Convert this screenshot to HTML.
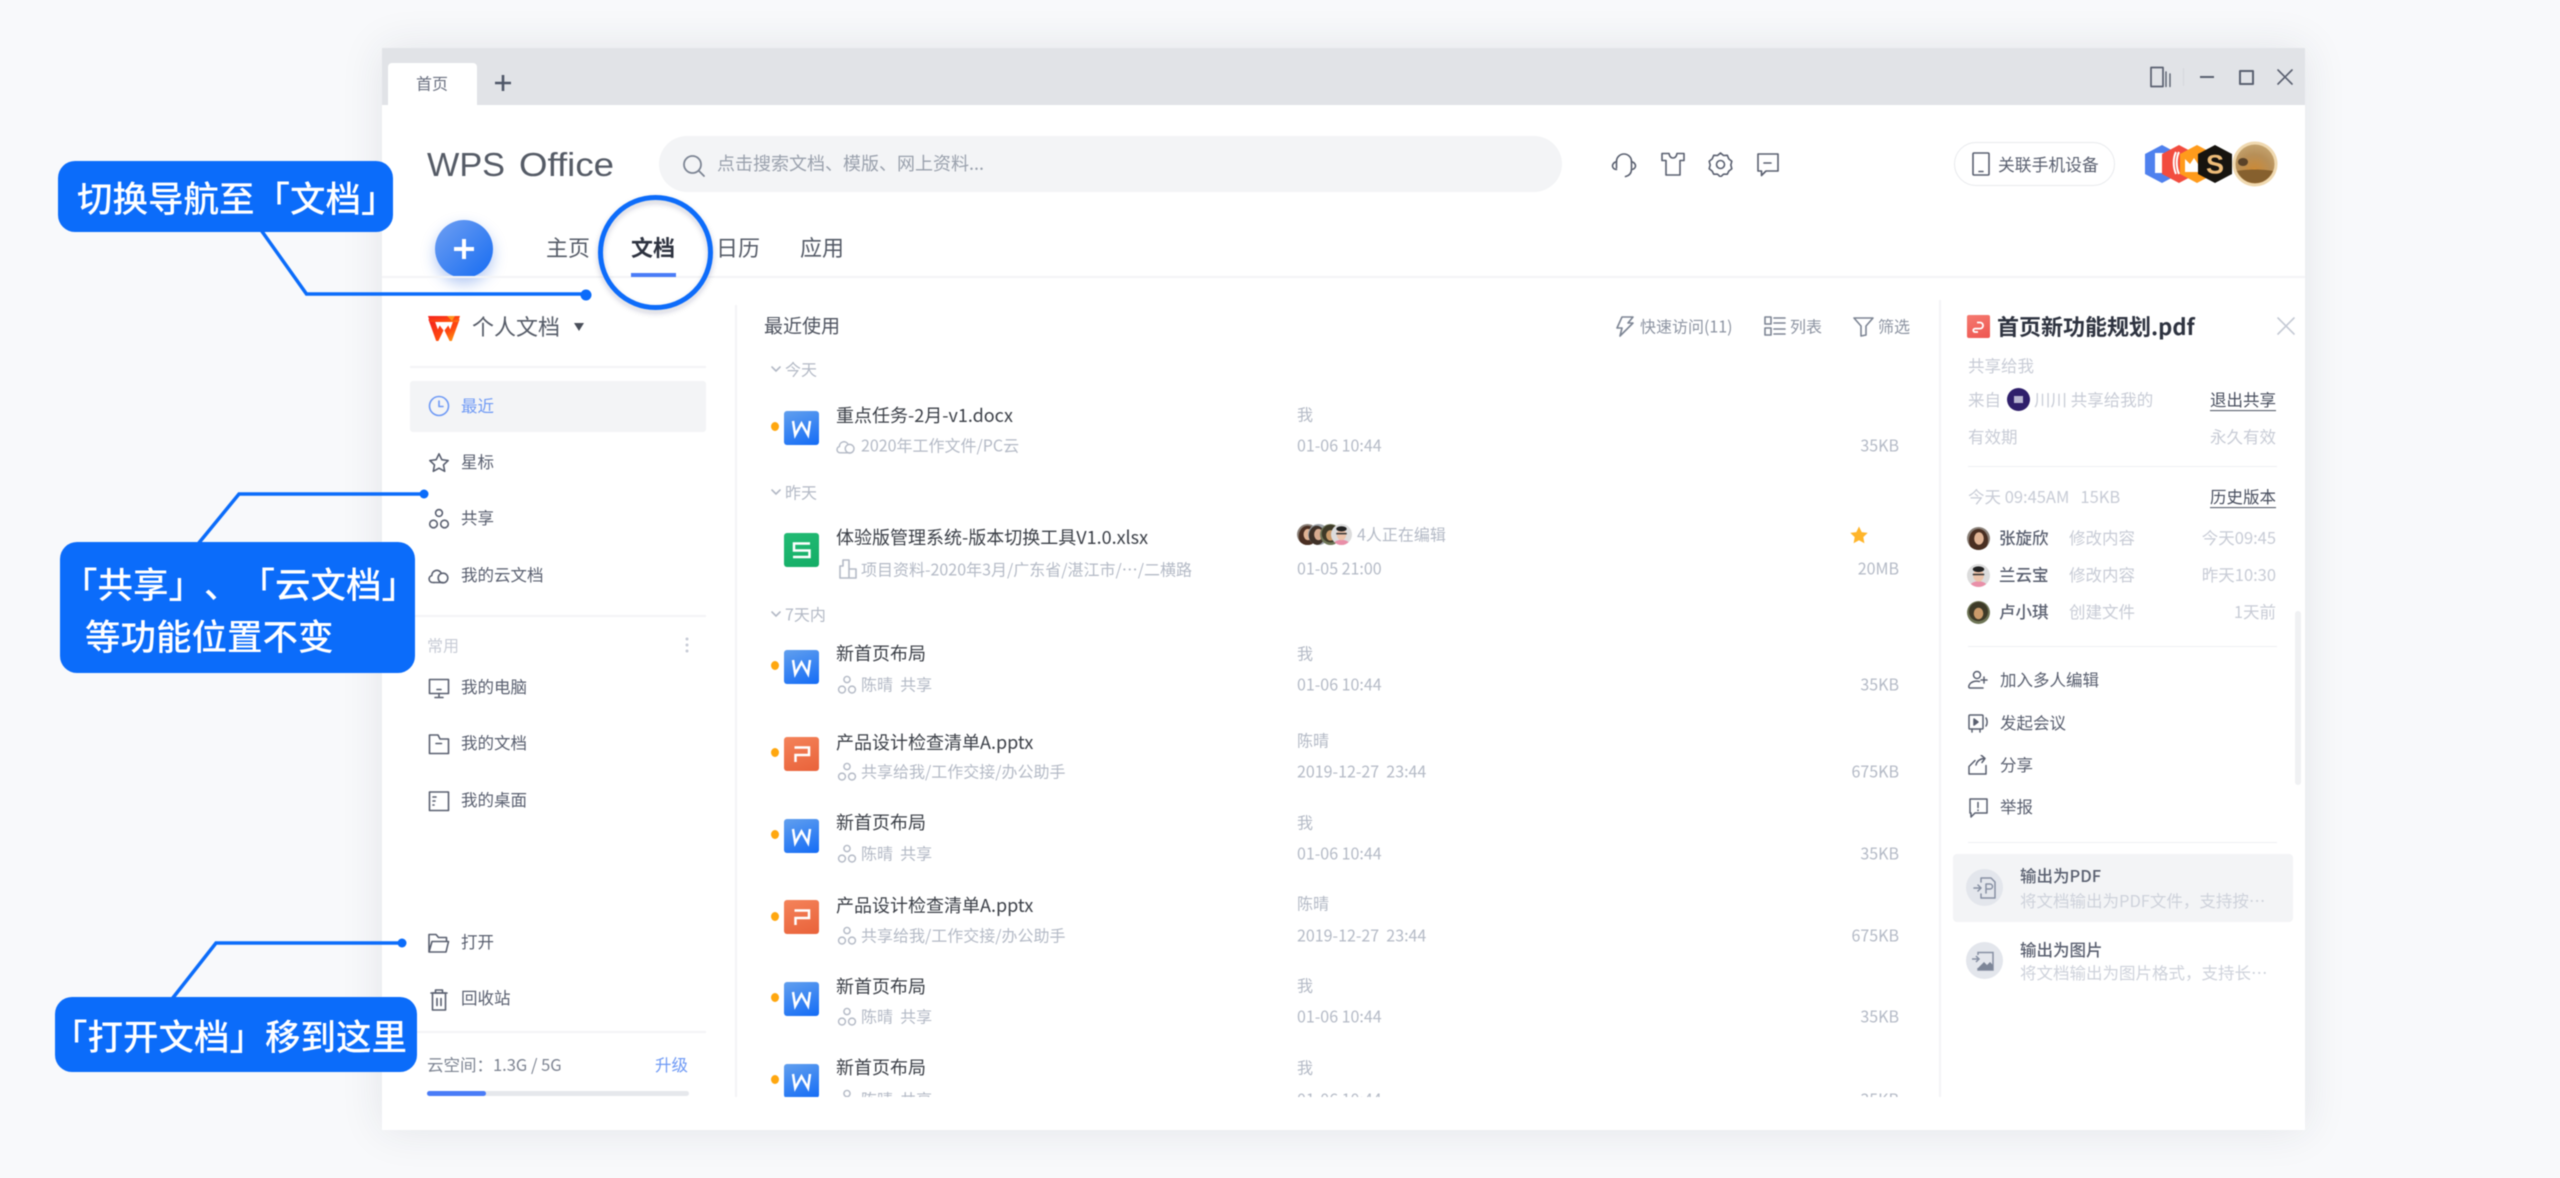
<!DOCTYPE html>
<html lang="zh">
<head>
<meta charset="utf-8">
<title>WPS Office</title>
<style>
html,body{margin:0;padding:0;width:2560px;height:1178px;overflow:hidden;background:#f8f9fb}
body{font-family:"Noto Sans CJK SC","Liberation Sans",sans-serif;color:#4a4f5a;text-spacing-trim:space-all}
#a{position:absolute;left:0;top:0;width:2560px;height:1178px;filter:blur(.45px)}
.win{position:absolute;left:382px;top:48px;width:1923px;height:1082px;background:#fff;box-shadow:0 0 40px rgba(40,50,70,.10)}
.b{position:absolute}
.t{position:absolute;white-space:nowrap;transform:translateY(-50%);line-height:1.2}
.ttl{font-size:18px;color:#3c4048}
.sub{font-size:16px;color:#b4bac6;transform:translateY(calc(-50% - 1px))}
.side{font-size:16.5px;color:#5a6070;left:461px}
.grp{font-size:16px;color:#b4bac6;left:785px}
.p{font-size:16.5px;color:#c8ccd6}
.d{font-size:16.5px;color:#5a6070}
.u{font-size:16.5px;color:#4a5060;text-decoration:underline;text-underline-offset:4px}
.dot{position:absolute;left:771px;width:8px;height:9px;border-radius:50%;background:#ffa70f}
.ic{position:absolute;fill:none;stroke:#5a6070;stroke-width:1.6;stroke-linejoin:round;stroke-linecap:round}
.ics{stroke:#b4bac6}
.fi{position:absolute;left:784px;width:35px;height:34px;border-radius:3px}
.fw{background:linear-gradient(160deg,#619fee,#146cf6)}
.fs{background:linear-gradient(160deg,#22bb74,#14ad66)}
.fp{background:linear-gradient(160deg,#f4835a,#e9623a)}
.fi svg{display:block;fill:none;stroke:#fff;stroke-width:2.5;stroke-linejoin:miter}
.call{position:absolute;background:#0b6cfa;border-radius:17px}
.ct{position:absolute;white-space:nowrap;color:#fff;font-size:35.5px;font-weight:500;line-height:1;transform:translateY(-50%)}
.av{position:absolute;border-radius:50%;overflow:hidden}
</style>
</head>
<body>
<svg width="0" height="0" style="position:absolute">
<defs>
<symbol id="i-clock" viewBox="0 0 22 22"><circle cx="11" cy="11" r="9.5"/><path d="M11 6v5.5h4"/></symbol>
<symbol id="i-star" viewBox="0 0 22 22"><path d="M11 1.8l2.8 5.9 6.4.8-4.7 4.4 1.2 6.4-5.7-3.1-5.7 3.1 1.2-6.4L1.800 8.500l6.400-.8z"/></symbol>
<symbol id="i-share" viewBox="0 0 22 22"><circle cx="11" cy="5" r="3.400"/><circle cx="5.500" cy="16" r="3.800"/><circle cx="16.500" cy="16" r="3.800"/></symbol>
<symbol id="i-cloud" viewBox="0 0 22 22"><path d="M6 18.500H4.500a3.500 3.500 0 0 1-.7-6.900A5 5 0 0 1 13.200 9"/><circle cx="15" cy="14" r="4.800"/><path d="M6 18.500h9"/></symbol>
<symbol id="i-pc" viewBox="0 0 22 22"><rect x="1.500" y="2.500" width="19" height="14"/><path d="M11 16.500v3.500M7 20.500h8M9 12.500h4"/></symbol>
<symbol id="i-folder" viewBox="0 0 22 22"><path d="M1.500 20.500V2h8.500l2 4h8.500v14.500zM8 10.500h5.500"/></symbol>
<symbol id="i-desk" viewBox="0 0 22 22"><rect x="1.500" y="2" width="19" height="18.500"/><path d="M5 7h3M5 11h2M5 15h1"/></symbol>
<symbol id="i-open" viewBox="0 0 22 22"><path d="M1.500 20V2.500h7l2.500 3h8v3.500M1.500 20l3-10.500h16.500l-2.500 10.500z"/></symbol>
<symbol id="i-trash" viewBox="0 0 22 22"><rect x="4.500" y="4.500" width="13" height="17"/><path d="M7.500 4.500V1.500h7v3M3 4.500h16M9 10v7M13 10v7"/></symbol>
<symbol id="i-w" viewBox="0 0 35 34"><path d="M9 10l2.200 14 6.300-11.500L24 24l2-14"/></symbol>
<symbol id="i-s" viewBox="0 0 35 34"><path d="M26 10.500H10v7h15.500v6.500H9"/></symbol>
<symbol id="i-p" viewBox="0 0 35 34"><path d="M11.500 25v-7h13.500v-7.500H10.500"/></symbol>
<symbol id="f1" viewBox="0 0 24 24"><rect width="24" height="24" fill="#8a8078"/><ellipse cx="12" cy="14" rx="10" ry="12" fill="#4a2f22"/><ellipse cx="12.500" cy="12" rx="5" ry="6.500" fill="#e0b394"/></symbol>
<symbol id="f2" viewBox="0 0 24 24"><rect width="24" height="24" fill="#dcdcdc"/><ellipse cx="12" cy="25" rx="10" ry="7" fill="#e98fa8"/><ellipse cx="12" cy="12" rx="5.500" ry="6.500" fill="#ecc3aa"/><ellipse cx="12" cy="5.500" rx="6" ry="3" fill="#222"/><path d="M6 11h12" stroke="#333" stroke-width="1.600"/></symbol>
<symbol id="f3" viewBox="0 0 24 24"><rect width="24" height="24" fill="#6e7556"/><ellipse cx="12" cy="11" rx="10" ry="10" fill="#3e3a28"/><ellipse cx="12" cy="13" rx="5" ry="6" fill="#c99a6a"/></symbol>
<symbol id="f4" viewBox="0 0 24 24"><rect width="24" height="24" fill="#9aa0a6"/><ellipse cx="10" cy="13" rx="9" ry="11" fill="#3f3128"/><ellipse cx="12" cy="12" rx="5" ry="6.500" fill="#d8ab90"/></symbol>
</defs>
</svg>
<div id="a">
<div class="win"></div>

<!-- title bar -->
<div class="b" style="left:382px;top:48px;width:1923px;height:57px;background:#e1e3e7"></div>
<div class="b" style="left:388px;top:63px;width:89px;height:42px;background:#fff;border-radius:4px 4px 0 0"></div>
<div class="t" style="left:416px;top:83px;font-size:16px;color:#6a7080">首页</div>
<svg class="b" style="left:495px;top:74px" width="16" height="18"><path d="M8 1v16M0 9h16" stroke="#4f5768" stroke-width="2.600" fill="none"/></svg>
<svg class="ic" style="left:2150px;top:66px;stroke-width:1.700" width="22" height="22" viewBox="0 0 22 22"><rect x="1" y="1.500" width="12" height="19" /><path d="M16 6v14.500M20 8v12.500" stroke-width="1.400"/></svg>
<div class="b" style="left:2183px;top:68px;width:1px;height:18px;background:#d5d7dc"></div>
<div class="b" style="left:2200px;top:76px;width:14px;height:2px;background:#5a6070"></div>
<div class="b" style="left:2239px;top:70px;width:11px;height:11px;border:2px solid #5a6070;border-radius:1px"></div>
<svg class="ic" style="left:2277px;top:69px" width="16" height="16"><path d="M1 1l14 14M15 1L1 15"/></svg>

<!-- logo -->
<svg class="b" style="left:0;top:0;overflow:visible" width="700" height="200" font-family="'Liberation Sans',sans-serif" font-size="33" fill="#555b66">
<text x="427" y="176" textLength="78" lengthAdjust="spacingAndGlyphs">WPS</text>
<text x="519" y="176" textLength="95" lengthAdjust="spacingAndGlyphs">Office</text>
</svg>

<!-- search -->
<div class="b" style="left:659px;top:136px;width:903px;height:56px;background:#f3f4f6;border-radius:28px"></div>
<svg class="ic" style="left:682px;top:154px;stroke:#7d8594;stroke-width:1.800" width="24" height="24"><circle cx="10.500" cy="10.500" r="8.500"/><path d="M17 17l5 5"/></svg>
<div class="t" style="left:717px;top:164px;font-size:18px;color:#9aa1ad">点击搜索文档、模版、网上资料...</div>

<!-- top icons -->
<svg class="ic" style="left:1611px;top:152px" width="26" height="26" viewBox="0 0 26 26"><path d="M5.500 16V9.500a7.500 7.500 0 0 1 15 0V16"/><path d="M5.500 9.500C3 10.500 1.500 12 1.500 14s2 3.500 4 3.500M20.500 9.500c2.500 1 4 2.500 4 4.500s-2 3.500-4 3.500M20.500 17c0 4-2 6.500-6 7.500"/></svg>
<svg class="ic" style="left:1661px;top:152px" width="24" height="24" viewBox="0 0 24 24"><path d="M8 1.500H1v7h4V23h14V8.500h4v-7h-7c-.5 3-1.800 4.500-4 4.500S8.500 4.500 8 1.500z"/></svg>
<svg class="ic" style="left:1708px;top:152px" width="25" height="25" viewBox="0 0 25 25"><path d="M12.500 1l3 2.500 3.800-.2 1.500 3.600 3 2.400-1 3.700 1 3.700-3 2.400-1.500 3.100-3.800 0-3 2.800-3-2.800-3.800 0-1.500-3.100-3-2.400 1-3.700-1-3.700 3-2.400L5.700 3.300l3.800.2z"/><circle cx="12.500" cy="12.500" r="4"/></svg>
<svg class="ic" style="left:1756px;top:152px" width="24" height="25" viewBox="0 0 24 25"><path d="M2 2h20v17H10l-4.500 4.500V19H2zM8 11h7"/></svg>

<!-- device btn -->
<div class="b" style="left:1954px;top:142px;width:159px;height:42px;border:1.500px solid #e8eaed;border-radius:22px;background:#fff"></div>
<svg class="ic" style="left:1972px;top:152px" width="18" height="24" viewBox="0 0 18 24"><rect x="1" y="1" width="16" height="22" rx="1"/><path d="M7 19.500h4"/></svg>
<div class="t" style="left:1998px;top:164px;font-size:16.800px;color:#5a6070">关联手机设备</div>

<!-- hex avatars -->
<svg class="b" style="left:2140px;top:140px" width="145" height="50" viewBox="0 0 145 50">
<polygon points="5,14 22,5 39,14 39,34 22,43 5,34" fill="#4f81ee"/>
<rect x="15" y="13" width="14" height="20" fill="#fff"/>
<polygon points="22,14 39,5 56,14 56,34 39,43 22,34" fill="#f24c3f"/>
<path d="M36 12c-3 6-3 15 0 22M39 12c-3 6-3 15 0 22" stroke="#fff" stroke-width="2" fill="none"/>
<polygon points="40,14 57,5 74,14 74,34 57,43 40,34" fill="#ff9b1c"/>
<path d="M45 19l5 5 4-6 4 6 0 8H45z" fill="#fff"/>
<polygon points="58,14 75,5 92,14 92,34 75,43 58,34" fill="#17140f"/>
<text x="75" y="33.500" text-anchor="middle" font-family="'Liberation Sans',sans-serif" font-weight="700" font-size="27" fill="#eebc78">S</text>
<defs><radialGradient id="sun" cx=".48" cy=".7" r=".8"><stop offset="0" stop-color="#f8a020"/><stop offset=".12" stop-color="#c98a3a"/><stop offset=".55" stop-color="#b78f58"/><stop offset="1" stop-color="#c9ab78"/></radialGradient></defs>
<circle cx="115" cy="24" r="22.500" fill="#f0d9b0"/>
<circle cx="115" cy="24" r="19.500" fill="url(#sun)"/>
<ellipse cx="103" cy="22" rx="5" ry="4" fill="#5a4228"/>
<path d="M97 31c10-2 26-2 36 0-4 8-10 12-18 12s-14-4-18-12z" fill="#86602e"/>
</svg>

<!-- nav -->
<div class="b" style="left:435px;top:220px;width:58px;height:58px;border-radius:50%;background:linear-gradient(135deg,#6f9ff2,#166cf3);box-shadow:0 6px 14px rgba(40,100,220,.35)"></div>
<svg class="b" style="left:452px;top:237px" width="24" height="24"><path d="M12 2v20M2 12h20" stroke="#fff" stroke-width="4" fill="none"/></svg>
<div class="t" style="left:546px;top:247px;font-size:22px;color:#565c68">主页</div>
<div class="t" style="left:631px;top:247px;font-size:22px;color:#2e3340;font-weight:700">文档</div>
<div class="t" style="left:716px;top:247px;font-size:22px;color:#565c68">日历</div>
<div class="t" style="left:800px;top:247px;font-size:22px;color:#565c68">应用</div>
<div class="b" style="left:382px;top:276px;width:1923px;height:2px;background:#f3f4f6"></div>
<div class="b" style="left:631px;top:273px;width:45px;height:4px;background:#4a7cf7"></div>

<!-- sidebar -->
<div class="b" style="left:735px;top:305px;width:2px;height:792px;background:#f3f4f6"></div>
<svg class="b" style="left:427px;top:315px" width="34" height="26" viewBox="0 0 34 26"><defs><linearGradient id="wl" x1="0" x2="1" y1="0" y2="1"><stop offset="0" stop-color="#f3201f"/><stop offset=".7" stop-color="#ff4a10"/><stop offset="1" stop-color="#ff8a10"/></linearGradient></defs><path d="M4 3.500l6.500 18L17 8l6.500 13.500L30 3.500" fill="none" stroke="url(#wl)" stroke-width="5.500" stroke-linejoin="miter"/><path d="M1 1h32l-2 6H3z" fill="url(#wl)"/><path d="M10 7h14l-7 9z" fill="#fff"/><path d="M20 1h8l-3 5z" fill="#ffb020" opacity=".75"/></svg>
<div class="t" style="left:472px;top:326px;font-size:22px;color:#565c68">个人文档</div>
<svg class="b" style="left:574px;top:323px" width="10" height="8"><path d="M0 0h10L5 8z" fill="#4a4f5a"/></svg>
<div class="b" style="left:410px;top:366px;width:296px;height:2px;background:#f3f4f6"></div>
<div class="b" style="left:410px;top:381px;width:296px;height:51px;background:#f3f4f6;border-radius:3px"></div>

<svg class="ic" style="left:428px;top:395px;stroke:#6f9af5" width="22" height="22"><use href="#i-clock"/></svg>
<div class="t side" style="top:406px;color:#6f9af5">最近</div>
<svg class="ic" style="left:428px;top:452px" width="22" height="22"><use href="#i-star"/></svg>
<div class="t side" style="top:462px">星标</div>
<svg class="ic" style="left:428px;top:508px" width="22" height="22"><use href="#i-share"/></svg>
<div class="t side" style="top:518px">共享</div>
<svg class="ic" style="left:428px;top:564px" width="22" height="22"><use href="#i-cloud"/></svg>
<div class="t side" style="top:575px">我的云文档</div>
<div class="b" style="left:410px;top:615px;width:296px;height:2px;background:#f3f4f6"></div>
<div class="t" style="left:427px;top:645px;font-size:16px;color:#c8ccd6">常用</div>
<svg class="b" style="left:685px;top:637px" width="4" height="16"><circle cx="2" cy="2" r="1.500" fill="#c8ccd6"/><circle cx="2" cy="8" r="1.500" fill="#c8ccd6"/><circle cx="2" cy="14" r="1.500" fill="#c8ccd6"/></svg>
<svg class="ic" style="left:428px;top:677px" width="22" height="22"><use href="#i-pc"/></svg>
<div class="t side" style="top:687px">我的电脑</div>
<svg class="ic" style="left:428px;top:733px" width="22" height="22"><use href="#i-folder"/></svg>
<div class="t side" style="top:743px">我的文档</div>
<svg class="ic" style="left:428px;top:790px" width="22" height="22"><use href="#i-desk"/></svg>
<div class="t side" style="top:800px">我的桌面</div>
<svg class="ic" style="left:427px;top:932px" width="23" height="22"><use href="#i-open"/></svg>
<div class="t side" style="top:942px">打开</div>
<svg class="ic" style="left:428px;top:988px" width="22" height="23"><use href="#i-trash"/></svg>
<div class="t side" style="top:998px">回收站</div>
<div class="b" style="left:410px;top:1031px;width:296px;height:2px;background:#f3f4f6"></div>
<div class="t" style="left:427px;top:1065px;font-size:16.500px;color:#7d8492">云空间：1.3G / 5G</div>
<div class="t" style="left:655px;top:1065px;font-size:16.500px;color:#6f9af5">升级</div>
<div class="b" style="left:427px;top:1091px;width:262px;height:5px;background:#e6e8ec;border-radius:3px"></div>
<div class="b" style="left:427px;top:1091px;width:59px;height:5px;background:#4a7cf7;border-radius:3px"></div>

<!-- list header -->
<div class="t" style="left:764px;top:326px;font-size:19px;color:#4f5460">最近使用</div>
<svg class="ic" style="left:1616px;top:316px;stroke:#7d8594" width="19" height="21" viewBox="0 0 19 21"><path d="M6 1h11l-5 6h5L4 20l2-8H1z"/></svg>
<div class="t" style="left:1640px;top:326px;font-size:16px;color:#8d94a2">快速访问(11)</div>
<svg class="ic" style="left:1764px;top:316px;stroke:#7d8594" width="22" height="20" viewBox="0 0 22 20"><rect x="1" y="1" width="6" height="7"/><rect x="1" y="12" width="6" height="7"/><path d="M10 2h11M10 7h11M10 13h11M10 18h11"/></svg>
<div class="t" style="left:1790px;top:326px;font-size:16px;color:#8d94a2">列表</div>
<svg class="ic" style="left:1853px;top:317px;stroke:#7d8594" width="21" height="20" viewBox="0 0 21 20"><path d="M1 1h19l-7 8v9l-5 1V9z"/></svg>
<div class="t" style="left:1878px;top:326px;font-size:16px;color:#8d94a2">筛选</div>

<!-- groups -->
<svg class="ic ics" style="left:771px;top:366px" width="10" height="7"><path d="M1 1l4 4 4-4"/></svg>
<div class="t grp" style="top:369px">今天</div>
<svg class="ic ics" style="left:771px;top:489px" width="10" height="7"><path d="M1 1l4 4 4-4"/></svg>
<div class="t grp" style="top:492px">昨天</div>
<svg class="ic ics" style="left:771px;top:611px" width="10" height="7"><path d="M1 1l4 4 4-4"/></svg>
<div class="t grp" style="top:614px">7天内</div>

<!-- row 1 -->
<div class="dot" style="top:422px"></div>
<div class="fi fw" style="top:411px"><svg width="35" height="34"><use href="#i-w"/></svg></div>
<div class="t ttl" style="left:836px;top:416px">重点任务-2月-v1.docx</div>
<svg class="ic ics" style="left:836px;top:436px" width="20" height="20"><use href="#i-cloud"/></svg>
<div class="t sub" style="left:861px;top:446px">2020年工作文件/PC云</div>
<div class="t sub" style="left:1297px;top:415px">我</div>
<div class="t sub" style="left:1297px;top:446px">01-06 10:44</div>
<div class="t sub" style="right:661px;top:446px">35KB</div>

<!-- row 2 -->
<div class="fi fs" style="top:533px"><svg width="35" height="34"><use href="#i-s"/></svg></div>
<div class="t ttl" style="left:836px;top:538px">体验版管理系统-版本切换工具V1.0.xlsx</div>
<svg class="ic ics" style="left:838px;top:558px" width="20" height="21" viewBox="0 0 20 21"><path d="M2 20V8h3V2h6v18zM11 11h7v9h-7z"/></svg>
<div class="t sub" style="left:861px;top:570px">项目资料-2020年3月/广东省/湛江市/…/二横路</div>
<svg class="av" style="left:1297px;top:524px" width="21" height="21"><use href="#f1"/></svg>
<svg class="av" style="left:1308px;top:524px" width="21" height="21"><use href="#f4"/></svg>
<svg class="av" style="left:1320px;top:524px" width="21" height="21"><use href="#f3"/></svg>
<svg class="av" style="left:1331px;top:524px" width="21" height="21"><use href="#f2"/></svg>
<div class="t sub" style="left:1357px;top:535px">4人正在编辑</div>
<div class="t sub" style="left:1297px;top:569px">01-05 21:00</div>
<svg class="b" style="left:1850px;top:526px" width="18" height="18" viewBox="0 0 18 18"><path d="M9 .5l2.700 5.600 6 .8-4.400 4.200 1.100 6.100L9 14.300l-5.400 2.900 1.100-6.100L.3 6.900l6-.8z" fill="#ffb52a"/></svg>
<div class="t sub" style="right:661px;top:569px">20MB</div>

<!-- row 3 -->
<div class="dot" style="top:661px"></div>
<div class="fi fw" style="top:650px"><svg width="35" height="34"><use href="#i-w"/></svg></div>
<div class="t ttl" style="left:836px;top:654px">新首页布局</div>
<svg class="ic ics" style="left:837px;top:675px" width="20" height="20"><use href="#i-share"/></svg>
<div class="t sub" style="left:861px;top:685px">陈晴&nbsp;&nbsp;共享</div>
<div class="t sub" style="left:1297px;top:654px">我</div>
<div class="t sub" style="left:1297px;top:685px">01-06 10:44</div>
<div class="t sub" style="right:661px;top:685px">35KB</div>

<!-- row 4 -->
<div class="dot" style="top:748px"></div>
<div class="fi fp" style="top:737px"><svg width="35" height="34"><use href="#i-p"/></svg></div>
<div class="t ttl" style="left:836px;top:743px">产品设计检查清单A.pptx</div>
<svg class="ic ics" style="left:837px;top:762px" width="20" height="20"><use href="#i-share"/></svg>
<div class="t sub" style="left:861px;top:772px">共享给我/工作交接/办公助手</div>
<div class="t sub" style="left:1297px;top:741px">陈晴</div>
<div class="t sub" style="left:1297px;top:772px">2019-12-27&nbsp;&nbsp;23:44</div>
<div class="t sub" style="right:661px;top:772px">675KB</div>

<!-- row 5 -->
<div class="dot" style="top:830px"></div>
<div class="fi fw" style="top:819px"><svg width="35" height="34"><use href="#i-w"/></svg></div>
<div class="t ttl" style="left:836px;top:823px">新首页布局</div>
<svg class="ic ics" style="left:837px;top:844px" width="20" height="20"><use href="#i-share"/></svg>
<div class="t sub" style="left:861px;top:854px">陈晴&nbsp;&nbsp;共享</div>
<div class="t sub" style="left:1297px;top:823px">我</div>
<div class="t sub" style="left:1297px;top:854px">01-06 10:44</div>
<div class="t sub" style="right:661px;top:854px">35KB</div>

<!-- row 6 -->
<div class="dot" style="top:912px"></div>
<div class="fi fp" style="top:900px"><svg width="35" height="34"><use href="#i-p"/></svg></div>
<div class="t ttl" style="left:836px;top:906px">产品设计检查清单A.pptx</div>
<svg class="ic ics" style="left:837px;top:926px" width="20" height="20"><use href="#i-share"/></svg>
<div class="t sub" style="left:861px;top:936px">共享给我/工作交接/办公助手</div>
<div class="t sub" style="left:1297px;top:904px">陈晴</div>
<div class="t sub" style="left:1297px;top:936px">2019-12-27&nbsp;&nbsp;23:44</div>
<div class="t sub" style="right:661px;top:936px">675KB</div>

<!-- row 7 -->
<div class="dot" style="top:993px"></div>
<div class="fi fw" style="top:982px"><svg width="35" height="34"><use href="#i-w"/></svg></div>
<div class="t ttl" style="left:836px;top:987px">新首页布局</div>
<svg class="ic ics" style="left:837px;top:1007px" width="20" height="20"><use href="#i-share"/></svg>
<div class="t sub" style="left:861px;top:1017px">陈晴&nbsp;&nbsp;共享</div>
<div class="t sub" style="left:1297px;top:986px">我</div>
<div class="t sub" style="left:1297px;top:1017px">01-06 10:44</div>
<div class="t sub" style="right:661px;top:1017px">35KB</div>

<!-- row 8 -->
<div class="dot" style="top:1075px"></div>
<div class="fi fw" style="top:1064px"><svg width="35" height="34"><use href="#i-w"/></svg></div>
<div class="t ttl" style="left:836px;top:1068px">新首页布局</div>
<svg class="ic ics" style="left:837px;top:1089px" width="20" height="20"><use href="#i-share"/></svg>
<div class="t sub" style="left:861px;top:1100px">陈晴&nbsp;&nbsp;共享</div>
<div class="t sub" style="left:1297px;top:1068px">我</div>
<div class="t sub" style="left:1297px;top:1100px">01-06 10:44</div>
<div class="t sub" style="right:661px;top:1100px">35KB</div>
<div class="b" style="left:740px;top:1097px;width:1199px;height:33px;background:#fff"></div>

<!-- right panel -->
<div class="b" style="left:1939px;top:300px;width:2px;height:797px;background:#f3f4f6"></div>
<div class="b" style="left:1967px;top:315px;width:23px;height:23px;background:linear-gradient(160deg,#f57a70,#ee5550);border-radius:2px"></div>
<svg class="b" style="left:1967px;top:315px" width="23" height="23" viewBox="0 0 23 23"><path d="M11 17H8a1.600 1.600 0 0 1 0-3.400H13a2.800 2.800 0 0 0 0-6.100H10" stroke="#fff" stroke-width="1.800" fill="none"/></svg>
<div class="t" style="left:1997px;top:326px;font-size:22px;font-weight:700;color:#2e3340">首页新功能规划.pdf</div>
<svg class="ic" style="left:2277px;top:317px;stroke:#c5cad5" width="18" height="18"><path d="M1 1l16 16M17 1L1 17"/></svg>
<div class="t p" style="left:1968px;top:366px">共享给我</div>
<div class="t p" style="left:1968px;top:400px">来自</div>
<div class="av" style="left:2007px;top:388px;width:23px;height:23px;background:#2f1f6b"></div>
<div class="b" style="left:2014px;top:396px;width:9px;height:7px;background:#b9b6d2"></div>
<div class="t p" style="left:2034px;top:400px">川川 共享给我的</div>
<div class="t u" style="right:284px;top:400px">退出共享</div>
<div class="t p" style="left:1968px;top:437px">有效期</div>
<div class="t p" style="right:284px;top:437px">永久有效</div>
<div class="b" style="left:1968px;top:466px;width:309px;height:1px;background:#eef0f3"></div>
<div class="t p" style="left:1968px;top:497px">今天 09:45AM&nbsp;&nbsp;&nbsp;15KB</div>
<div class="t u" style="right:284px;top:497px">历史版本</div>

<svg class="av" style="left:1967px;top:527px" width="23" height="23"><use href="#f1"/></svg>
<div class="t d" style="left:1999px;top:538px;font-weight:500">张旋欣</div>
<div class="t p" style="left:2069px;top:538px">修改内容</div>
<div class="t p" style="right:284px;top:538px">今天09:45</div>
<svg class="av" style="left:1967px;top:564px" width="23" height="23"><use href="#f2"/></svg>
<div class="t d" style="left:1999px;top:575px;font-weight:500">兰云宝</div>
<div class="t p" style="left:2069px;top:575px">修改内容</div>
<div class="t p" style="right:284px;top:575px">昨天10:30</div>
<svg class="av" style="left:1967px;top:601px" width="23" height="23"><use href="#f3"/></svg>
<div class="t d" style="left:1999px;top:612px;font-weight:500">卢小琪</div>
<div class="t p" style="left:2069px;top:612px">创建文件</div>
<div class="t p" style="right:284px;top:612px">1天前</div>

<div class="b" style="left:2295px;top:611px;width:6px;height:174px;background:#f0f1f3;border-radius:3px"></div>
<div class="b" style="left:1968px;top:646px;width:309px;height:1px;background:#eef0f3"></div>

<svg class="ic" style="left:1968px;top:670px;stroke-width:1.500" width="21" height="20" viewBox="0 0 21 20"><circle cx="9" cy="5" r="3.500"/><path d="M15 18H2c-1.500 0-1.500-2-.5-3.500 2-3 6-4 10-3M16 7v6M13 10h6"/></svg>
<div class="t d" style="left:2000px;top:680px">加入多人编辑</div>
<svg class="ic" style="left:1968px;top:713px;stroke-width:1.500" width="21" height="21" viewBox="0 0 21 21"><rect x="1" y="2" width="14" height="14" rx="1"/><path d="M6 6l4 3-4 3z" fill="#5a6070"/><path d="M18 5c1.500 2 1.500 6 0 8M4 16v3M12 16v3"/></svg>
<div class="t d" style="left:2000px;top:723px">发起会议</div>
<svg class="ic" style="left:1968px;top:755px;stroke-width:1.500" width="20" height="20" viewBox="0 0 20 20"><path d="M7 5.500L1 11.500V19h17v-8.500M8 10c1-4 4-6.500 9-6.500M13 0l4 3.500-3 4"/></svg>
<div class="t d" style="left:2000px;top:765px">分享</div>
<svg class="ic" style="left:1968px;top:798px;stroke-width:1.500" width="20" height="20" viewBox="0 0 20 20"><path d="M2 1h17v14H7l-4 4v-4H2zM10 4.500v5M10 12v.5"/></svg>
<div class="t d" style="left:2000px;top:807px">举报</div>
<div class="b" style="left:1968px;top:842px;width:309px;height:1px;background:#eef0f3"></div>

<div class="b" style="left:1953px;top:854px;width:340px;height:68px;background:#f3f4f6;border-radius:4px"></div>
<div class="av" style="left:1966px;top:869px;width:37px;height:37px;background:#e3e6ec"></div>
<svg class="ic" style="left:1973px;top:877px;stroke:#8790a3;stroke-width:1.500" width="24" height="22" viewBox="0 0 24 22"><path d="M8 5V1h10l4 4v16H8v-4"/><path d="M1 11h7M5 8l3 3-3 3M13 16V7h4a2.500 2.500 0 0 1 0 5h-4"/></svg>
<div class="t" style="left:2020px;top:876px;font-size:16.500px;color:#5a6070;font-weight:500">输出为PDF</div>
<div class="t p" style="left:2020px;top:901px;color:#ced2db">将文档输出为PDF文件，支持按…</div>

<div class="av" style="left:1966px;top:942px;width:37px;height:37px;background:#e3e6ec"></div>
<svg class="b" style="left:1971px;top:951px" width="24" height="20" viewBox="0 0 24 20"><path d="M7 4V1.500h15V19H7v-2" fill="none" stroke="#8790a3" stroke-width="1.500"/><path d="M7 17l6-6 3 3 3-3 3 3v5H7z" fill="#7d8698"/><path d="M1 8h7M5 5l3 3-3 3" fill="none" stroke="#8790a3" stroke-width="1.500"/></svg>
<div class="t" style="left:2020px;top:950px;font-size:16.500px;color:#5a6070;font-weight:500">输出为图片</div>
<div class="t p" style="left:2020px;top:973px;color:#ced2db">将文档输出为图片格式，支持长…</div>
<div class="b" style="left:1945px;top:981px;width:345px;height:149px;background:#fff"></div>

<!-- annotations -->
<svg class="b" style="left:0;top:0;overflow:visible" width="2560" height="1178">
<defs><filter id="cs" x="-20%" y="-20%" width="140%" height="140%"><feDropShadow dx="0" dy="3" stdDeviation="3" flood-color="#1b2a50" flood-opacity=".22"/></filter></defs>
<ellipse cx="655.500" cy="252.500" rx="55" ry="55" fill="none" stroke="#0b6cfa" stroke-width="5" filter="url(#cs)"/>
<path d="M261 230L306.500 294H586" fill="none" stroke="#0b6cfa" stroke-width="3.500"/>
<circle cx="586" cy="295" r="5.500" fill="#0b6cfa"/>
<path d="M198 544L239 494H424" fill="none" stroke="#0b6cfa" stroke-width="3.500"/>
<circle cx="424" cy="494" r="4.500" fill="#0b6cfa"/>
<path d="M172 999L216 943H402" fill="none" stroke="#0b6cfa" stroke-width="3.500"/>
<circle cx="402" cy="943" r="4.500" fill="#0b6cfa"/>
</svg>
<div class="call" style="left:58px;top:161px;width:335px;height:71px"></div>
<div class="ct" style="left:77px;top:197px">切换导航至「文档」</div>
<div class="call" style="left:60px;top:542px;width:355px;height:131px"></div>
<div class="ct" style="left:62px;top:583px">「共享」、「云文档」</div>
<div class="ct" style="left:85px;top:635px">等功能位置不变</div>
<div class="call" style="left:55px;top:997px;width:362px;height:75px"></div>
<div class="ct" style="left:52px;top:1035px">「打开文档」移到这里</div>
</div>
</body>
</html>
